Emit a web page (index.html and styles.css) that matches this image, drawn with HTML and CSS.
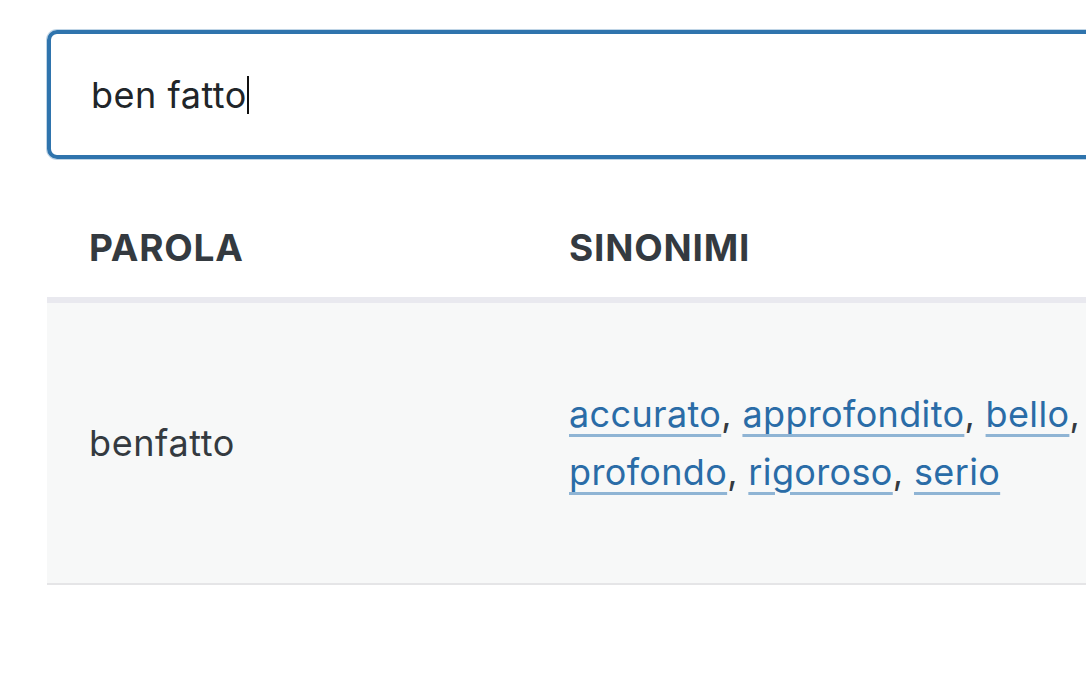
FILE: index.html
```html
<!DOCTYPE html>
<html lang="it">
<head>
<meta charset="utf-8">
<title>Sinonimi</title>
<link rel="stylesheet" href="styles.css">
</head>
<body>
<main class="page">
  <div class="search">
    <span class="search-text">ben fatto</span><span class="caret"></span>
  </div>
  <table class="results">
    <thead>
      <tr>
        <th class="col-word">PAROLA</th>
        <th class="col-syn">SINONIMI</th>
      </tr>
    </thead>
    <tbody>
      <tr>
        <td class="word">benfatto</td>
        <td class="syns"><a href="#">accurato</a>, <a href="#">approfondito</a>, <a href="#">bello</a>, <a href="#">profondo</a>, <a href="#">rigoroso</a>, <a href="#">serio</a></td>
      </tr>
    </tbody>
  </table>
</main>
</body>
</html>
```
FILE: styles.css
```css
html, body {
  margin: 0;
  padding: 0;
  background: #ffffff;
  overflow: hidden;
}
body {
  font-family: Inter, "Noto Sans", "Liberation Sans", sans-serif;
  color: #343a40;
  font-size: 36px;
  letter-spacing: 0.35px;
}
.page {
  width: 1300px;
  padding: 30px 0 0 47px;
}
.search {
  box-sizing: border-box;
  height: 129px;
  border: 4px solid #2f74ad;
  border-radius: 10px;
  box-shadow: 0 0 0 1px rgba(47, 116, 173, 0.3);
  padding: 0 0 0 40px;
  display: flex;
  align-items: center;
  color: #212529;
}
.search-text {
  line-height: 44px;
  letter-spacing: 0.5px;
}
.caret {
  display: inline-block;
  width: 2px;
  height: 38px;
  background: #111;
}
.results {
  border-collapse: collapse;
  table-layout: fixed;
  width: 1120px;
  margin-top: 42px;
}
.results th {
  text-align: left;
  font-weight: 700;
  font-size: 37px;
  letter-spacing: 0.8px;
  line-height: 58px;
  padding: 18px 42px 20px 42px;
  border-bottom: 6px solid #e9e9ef;
  color: #343a40;
}
.col-word {
  width: 396px;
}
.results td {
  background: #f7f8f8;
  padding: 82px 42px;
  line-height: 58px;
  vertical-align: middle;
  border-bottom: 2px solid #e5e5e7;
}
.word {
  color: #343a40;
  letter-spacing: 0.6px;
}
.syns a {
  color: #2a6ca7;
  text-decoration: underline;
  text-decoration-color: #8fb4d4;
  text-decoration-thickness: 3px;
  text-underline-offset: 7px;
}
```
